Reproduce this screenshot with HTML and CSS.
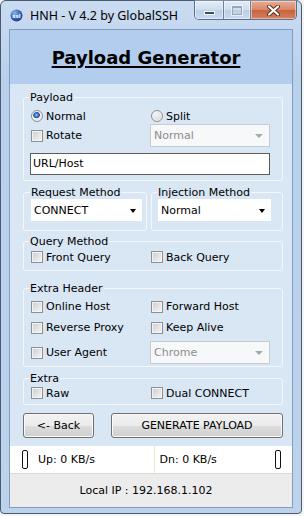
FILE: index.html
```html
<!doctype html>
<html>
  <head>
    <meta charset="utf-8">
    <title>HNH - V 4.2 by GlobalSSH</title>
    <meta name="viewport" content="width=device-width, initial-scale=1">
    <link rel="stylesheet" href="styles.css">
  </head>
  <body>
    <div class="window">
      <div class="titlebar">
        <svg class="app-icon" width="13" height="13" viewBox="0 0 13 13">
          <defs>
            <radialGradient id="globe" cx="0.35" cy="0.3" r="0.8">
              <stop offset="0" stop-color="#8fb4ee"/>
              <stop offset="0.6" stop-color="#2f5cb8"/>
              <stop offset="1" stop-color="#1b357a"/>
            </radialGradient>
          </defs>
          <circle cx="6.5" cy="6.5" r="6" fill="url(#globe)"/>
          <text x="6.5" y="8.6" font-size="5.5" font-family="DejaVu Sans" font-weight="bold" fill="#fff" text-anchor="middle">ssl</text>
        </svg>
        <span class="caption">HNH - V 4.2 by GlobalSSH</span>
        <div class="caption-buttons">
          <span class="cbtn min"><i></i></span>
          <span class="cbtn max"><i></i></span>
          <span class="cbtn close">
            <svg width="13" height="11" viewBox="0 0 13 11">
              <path d="M2 1.5 L11 9.5 M11 1.5 L2 9.5" stroke="#5a2a1c" stroke-width="4" stroke-linecap="round"/>
              <path d="M2 1.5 L11 9.5 M11 1.5 L2 9.5" stroke="#fff" stroke-width="2.2" stroke-linecap="round"/>
            </svg>
          </span>
        </div>
      </div>

      <div class="client">
        <div class="header">
          <h1>Payload Generator</h1>
        </div>

        <div class="panel">
          <!-- payload -->
          <fieldset class="group payload">
            <legend>Payload</legend>
            <div class="cols">
              <label class="opt"><span class="radio on"></span>Normal</label>
              <label class="opt"><span class="radio"></span>Split</label>
              <label class="opt"><span class="check"></span>Rotate</label>
              <div class="combo disabled">Normal<span class="arrow"></span></div>
            </div>
            <div class="textbox">URL/Host</div>
          </fieldset>

          <div class="pair">
            <fieldset class="group request">
              <legend>Request Method</legend>
              <div class="combo">CONNECT<span class="arrow"></span></div>
            </fieldset>
            <fieldset class="group injection">
              <legend>Injection Method</legend>
              <div class="combo">Normal<span class="arrow"></span></div>
            </fieldset>
          </div>

          <fieldset class="group query">
            <legend>Query Method</legend>
            <div class="cols">
              <label class="opt"><span class="check"></span>Front Query</label>
              <label class="opt"><span class="check"></span>Back Query</label>
            </div>
          </fieldset>

          <fieldset class="group headers">
            <legend>Extra Header</legend>
            <div class="cols">
              <label class="opt"><span class="check"></span>Online Host</label>
              <label class="opt"><span class="check"></span>Forward Host</label>
              <label class="opt"><span class="check"></span>Reverse Proxy</label>
              <label class="opt"><span class="check"></span>Keep Alive</label>
              <label class="opt agent"><span class="check"></span>User Agent</label>
              <div class="combo disabled agent-combo">Chrome<span class="arrow"></span></div>
            </div>
          </fieldset>

          <fieldset class="group extra">
            <legend>Extra</legend>
            <div class="cols">
              <label class="opt"><span class="check"></span>Raw</label>
              <label class="opt"><span class="check"></span>Dual CONNECT</label>
            </div>
          </fieldset>

          <div class="actions">
            <span class="button back">&lt;- Back</span>
            <span class="button generate">GENERATE PAYLOAD</span>
          </div>
        </div>

        <div class="traffic">
          <span class="led"></span>
          <span class="rate up">Up: 0 KB/s</span>
          <span class="sep"></span>
          <span class="rate down">Dn: 0 KB/s</span>
          <span class="led"></span>
        </div>
        <div class="statusbar">Local IP : 192.168.1.102</div>
      </div>
    </div>
  </body>
</html>
```

FILE: styles.css
```css
html,
body {
  margin: 0;
}
body {
  background: #f4f4f4;
  font-family: "DejaVu Sans", Verdana, sans-serif;
  font-size: 11px;
  color: #000;
}

/* window frame */
.window {
  width: 302px;
  height: 514px;
  box-sizing: border-box;
  border: 1px solid #4a5a70;
  border-radius: 6px 6px 4px 4px;
  background: linear-gradient(#cadcf1, #b9d0eb 80px, #bdd3ec);
  display: flex;
  flex-direction: column;
}
.titlebar {
  height: 28px;
  flex: none;
  display: flex;
  align-items: center;
  padding-left: 9px;
}
.app-icon {
  display: block;
  margin-top: 1px;
}
.caption {
  margin-left: 7px;
  font-family: "Noto Sans", "Open Sans", sans-serif;
  font-size: 12.5px;
  color: #000;
}
.caption-buttons {
  margin-left: auto;
  margin-right: 4px;
  align-self: flex-start;
  margin-top: -1px;
  display: flex;
  height: 20px;
  border: 1px solid #5d6f88;
  border-top-color: #7d8ea5;
  border-radius: 0 0 5px 5px;
  overflow: hidden;
  box-sizing: border-box;
}
.cbtn {
  display: flex;
  align-items: center;
  justify-content: center;
  height: 100%;
  box-shadow: inset 0 0 0 1px rgba(255, 255, 255, 0.45);
}
.cbtn.min {
  width: 28px;
  background: linear-gradient(#e4edf8, #cddcee 50%, #bccfe6 51%, #c9daee);
  border-right: 1px solid #6f8099;
}
.cbtn.max {
  width: 26px;
  background: linear-gradient(#e4edf8, #cddcee 50%, #bccfe6 51%, #c9daee);
  border-right: 1px solid #6f8099;
}
.cbtn.close {
  flex: 1;
  width: 45px;
  background: linear-gradient(#e8ac92, #d88766 50%, #c8623f 51%, #d2805e);
}
.cbtn.min i {
  display: block;
  width: 9px;
  height: 2px;
  margin-top: 5px;
  background: #3c4a5e;
  border: 1px solid #f4f7fb;
}
.cbtn.max i {
  display: block;
  width: 8px;
  height: 6px;
  border: 1px solid #97a6b9;
  border-top-width: 2px;
  box-shadow: 0 0 0 1px rgba(255, 255, 255, 0.6);
}

/* client area */
.client {
  flex: 1;
  margin: 0 8px 5px;
  border: 1px solid #7f9cc2;
  background: #d9e6f4;
  display: flex;
  flex-direction: column;
}
.header {
  height: 54px;
  flex: none;
  box-sizing: border-box;
  padding: 16px 10px 0 0;
  background: #b3cdef;
  text-align: center;
}
.header h1 {
  margin: 0;
  font-size: 18px;
  line-height: 24px;
  font-weight: bold;
  text-decoration: underline;
  text-decoration-thickness: 2px;
  text-underline-offset: 2px;
}

.panel {
  flex: none;
  height: 362px;
  box-sizing: border-box;
  padding: 7px 9px 8px 13px;
  display: flex;
  flex-direction: column;
}

/* group boxes */
.group {
  margin: 0;
  min-width: 0;
  border: 1px solid #f4f8fc;
  border-radius: 3px;
  padding: 0 12px 0 6px;
}
.group legend {
  padding: 0 1px;
  margin-left: -1px;
  line-height: 13px;
}
.cols {
  display: grid;
  grid-template-columns: 120px 120px;
  align-items: center;
}
.opt {
  display: flex;
  align-items: center;
  gap: 3px;
  padding-left: 1px;
  white-space: nowrap;
}
.check,
.radio {
  flex: none;
  width: 12px;
  height: 12px;
  box-sizing: border-box;
  border: 1px solid #8e8f8f;
  box-shadow: inset 0 0 0 1px #f4f4f4;
  background: linear-gradient(135deg, #c9ccd1, #f7f7f7);
}
.radio {
  border-radius: 50%;
  background: radial-gradient(circle at 40% 35%, #f6f6f6, #cdd0d5);
}
.radio.on {
  background: radial-gradient(circle at 45% 40%, #a8d2fa 0, #3b7fd4 1.6px, #1c4f9e 3px, #f2f4f6 3.6px, #dcdfe3 6px);
}

.combo {
  height: 23px;
  box-sizing: border-box;
  display: flex;
  align-items: center;
  justify-content: space-between;
  padding: 0 6px 0 3px;
  background: #fff;
}
.combo .arrow {
  width: 0;
  height: 0;
  border-left: 3.5px solid transparent;
  border-right: 3.5px solid transparent;
  border-top: 4px solid #000;
  margin-top: 1px;
}
.combo.disabled {
  color: #8d8d8d;
  background: #f6f8fa;
  border: 1px solid #c6ccd3;
}
.combo.disabled .arrow {
  border-top-color: #a8a8a8;
  border-left-width: 4px;
  border-right-width: 4px;
  border-top-width: 4px;
}
.textbox {
  height: 22px;
  box-sizing: border-box;
  margin-top: 6px;
  width: 240px;
  border: 1px solid #5c5c5c;
  background: #fff;
  padding: 3px 2px 0;
}

.payload .cols {
  margin-top: 4px;
  grid-template-rows: 16px 23px;
}
.payload {
  padding-bottom: 5px;
}

.pair {
  display: flex;
  gap: 4px;
  margin-top: 5px;
}
.request {
  width: 124px;
  box-sizing: border-box;
  padding: 0 4px 9px 7px;
}
.request .combo {
  height: 22px;
  width: 111px;
}
.injection {
  width: 132px;
  box-sizing: border-box;
  padding: 0 11px 9px 6px;
}
.injection .combo {
  height: 22px;
}

.query {
  margin-top: 4px;
  padding-bottom: 5px;
}
.query .cols {
  margin-top: 1px;
  grid-template-rows: 16px;
}

.headers {
  margin-top: 11px;
  padding-bottom: 2px;
}
.headers .cols {
  margin-top: 1px;
  grid-template-rows: 21px 21px 26px;
}
.headers .agent,
.headers .agent-combo {
  margin-top: 3px;
}

.extra {
  margin-top: 5px;
  padding-bottom: 3px;
}
.extra .cols {
  grid-template-rows: 16px;
}

/* buttons */
.actions {
  display: flex;
  margin-top: 8px;
  gap: 17px;
}
.button {
  height: 25px;
  box-sizing: border-box;
  display: flex;
  align-items: center;
  justify-content: center;
  border: 1px solid #707070;
  border-radius: 3px;
  box-shadow: inset 0 0 0 1px #fbfbfb;
  background: linear-gradient(#f2f2f2, #ebebeb 50%, #dddddd 51%, #cfcfcf);
}
.button.back {
  width: 71px;
}
.button.generate {
  width: 172px;
}

/* traffic + status */
.traffic {
  height: 27px;
  flex: none;
  display: flex;
  align-items: center;
  padding: 0 11px 0 12px;
  background: #fff;
}
.led {
  flex: none;
  width: 6px;
  height: 19px;
  box-sizing: border-box;
  border: 1px solid #111;
  border-radius: 2px;
}
.rate {
  flex: 1;
  white-space: nowrap;
}
.rate.up {
  margin-left: 10px;
}
.rate.down {
  margin-left: 5px;
}
.sep {
  align-self: stretch;
  width: 1px;
  background: #f1ecc4;
}
.statusbar {
  flex: 1;
  box-sizing: border-box;
  border-top: 1px solid #d9d9d9;
  background: #ececec;
  display: flex;
  align-items: center;
  justify-content: center;
  padding: 0 10px 0 0;
}
```
